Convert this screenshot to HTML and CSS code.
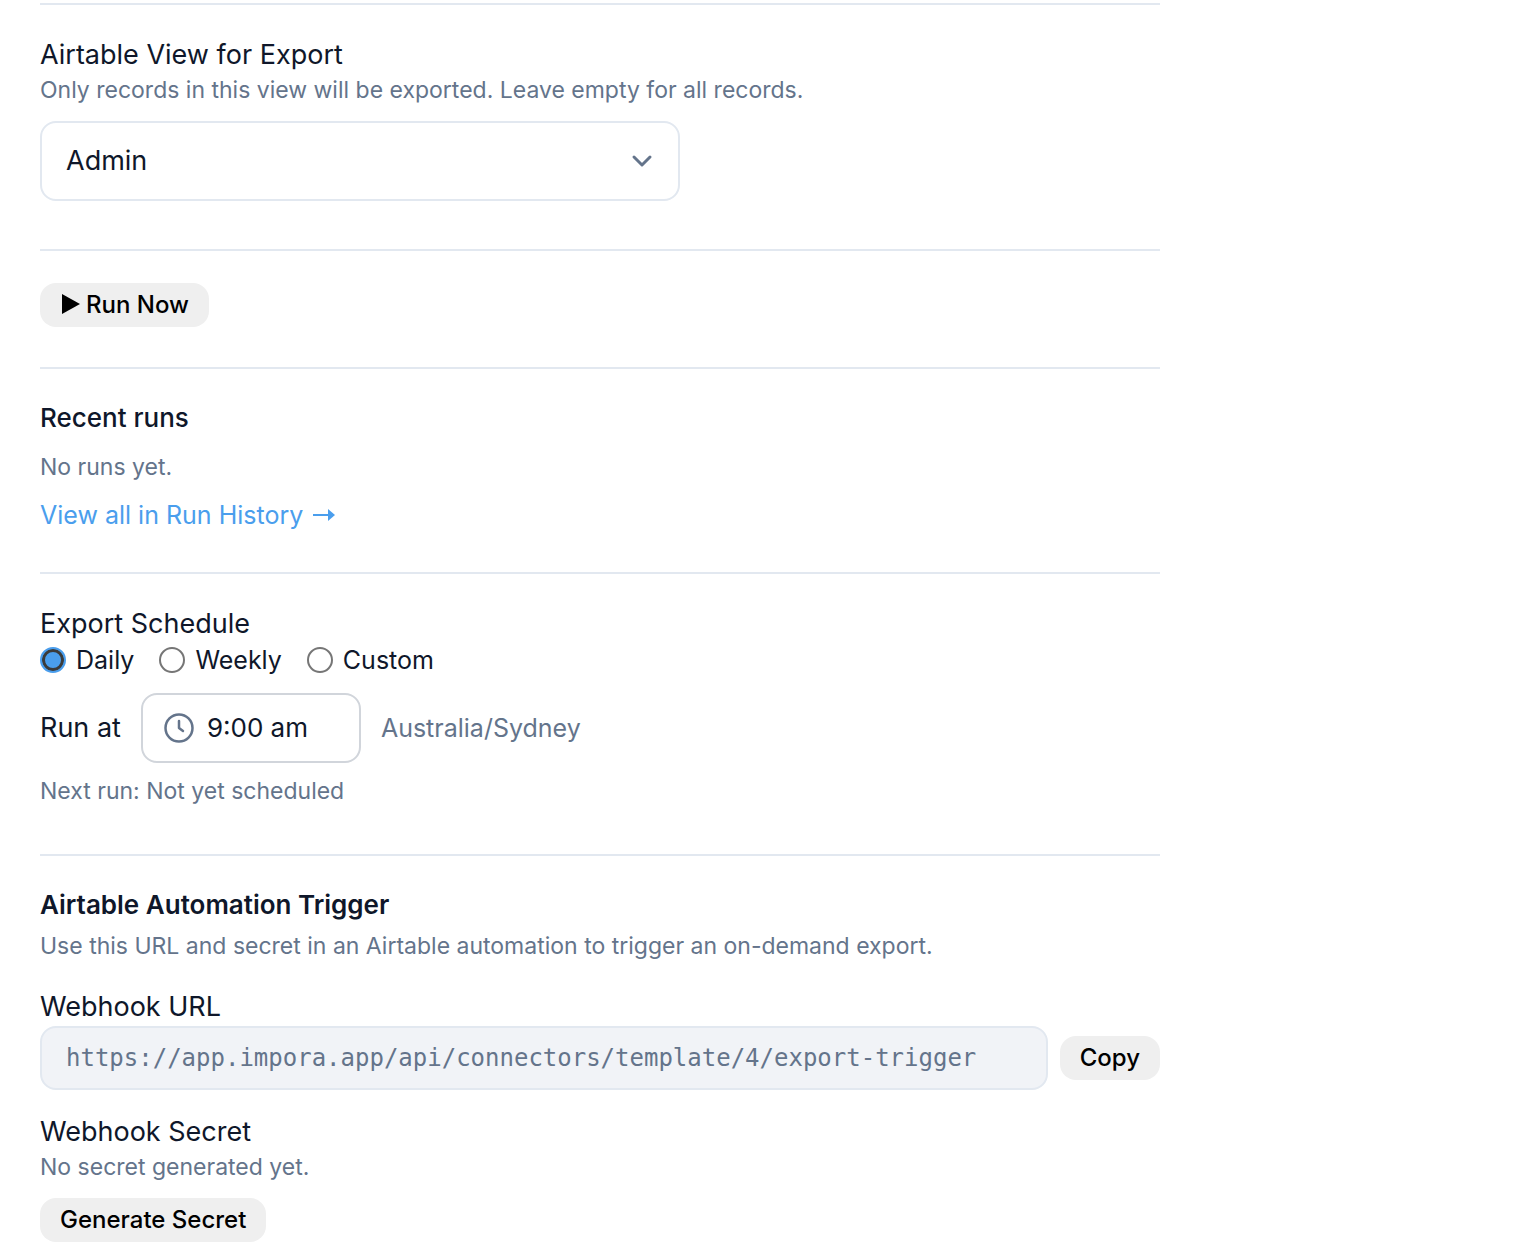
FILE: index.html
```
<!DOCTYPE html>
<html lang="en">
<head>
  <meta charset="UTF-8" />
  <meta name="viewport" content="width=device-width, initial-scale=1.0"/>
  <title>Export settings</title>
  <link rel="stylesheet" href="styles.css">
</head>
<body>
  <main class="page">
    <section class="section section-view">
      <label class="label" for="view">Airtable View for Export</label>
      <p class="hint">Only records in this view will be exported. Leave empty for all records.</p>
      <div class="select-wrap">
        <select id="view" class="select">
          <option>Admin</option>
        </select>
        <svg class="chevron" viewBox="0 0 24 24"><path d="M4 8l8 8 8-8"/></svg>
      </div>
    </section>

    <section class="section">
      <button class="btn" type="button">
        <svg class="play" viewBox="0 0 20 22"><path d="M2 0l18 10L2 20z"/></svg>
        Run Now
      </button>
    </section>

    <section class="section">
      <h2 class="heading heading-medium">Recent runs</h2>
      <p class="hint runs-empty">No runs yet.</p>
      <a class="link" href="#">View all in Run History
        <svg class="arrow" viewBox="0 0 22 14"><path class="shaft" d="M0 7h17"/><path d="M15 1l7 6-7 6z"/></svg>
      </a>
    </section>

    <section class="section section-schedule">
      <h2 class="label">Export Schedule</h2>
      <div class="radios">
        <label class="radio"><input type="radio" name="schedule" checked> Daily</label>
        <label class="radio"><input type="radio" name="schedule"> Weekly</label>
        <label class="radio"><input type="radio" name="schedule"> Custom</label>
      </div>
      <div class="run-at">
        <label class="label" for="time">Run at</label>
        <div class="time">
          <svg class="clock" viewBox="0 0 30 30"><circle cx="15" cy="15" r="13.5"/><path d="M15 8v7l4 3"/></svg>
          <input type="text" id="time" value="9:00 am">
        </div>
        <span class="timezone">Australia/Sydney</span>
      </div>
      <p class="hint">Next run: Not yet scheduled</p>
    </section>

    <section class="section">
      <h2 class="heading">Airtable Automation Trigger</h2>
      <p class="hint trigger-hint">Use this URL and secret in an Airtable automation to trigger an on-demand export.</p>

      <label class="label" for="webhook">Webhook URL</label>
      <div class="url-row">
        <input class="url" type="text" id="webhook" value="https://app.impora.app/api/connectors/template/4/export-trigger" readonly>
        <button class="btn" type="button">Copy</button>
      </div>

      <h3 class="label">Webhook Secret</h3>
      <p class="hint secret-hint">No secret generated yet.</p>
      <button class="btn" type="button">Generate Secret</button>
    </section>
  </main>
</body>
</html>
```
FILE: styles.css
```
:root {
  --text: #0f172a;
  --muted: #64748b;
  --line: #e2e8f0;
  --blue: #4a9eed;
}
* { box-sizing: border-box; margin: 0; padding: 0; }
body {
  background: #fff;
  color: var(--text);
  font-family: Inter, sans-serif;
  font-size: 26px;
  line-height: 34px;
}
input, select, button {
  font: inherit;
  color: inherit;
}
.page {
  max-width: 1200px;
  padding: 3px 40px 0;
}
.section {
  border-top: 2px solid var(--line);
  padding: 32px 0 40px;
}
.section-view { padding-bottom: 48px; }
.section-schedule { padding-bottom: 46px; }

.label {
  display: block;
  font-size: 27px;
  font-weight: 400;
  line-height: 36px;
}
.heading {
  font-size: 26px;
  font-weight: 600;
}
.heading-medium { font-weight: 500; }
.hint {
  color: var(--muted);
  font-size: 23px;
}

/* view select */
.select-wrap {
  position: relative;
  max-width: 640px;
  margin-top: 14px;
}
.select {
  display: block;
  width: 100%;
  height: 80px;
  padding: 0 64px 0 24px;
  appearance: none;
  background: #fff;
  border: 2px solid var(--line);
  border-radius: 16px;
  font-size: 27px;
}
.chevron {
  position: absolute;
  top: 28px;
  right: 26px;
  width: 24px;
  height: 24px;
  fill: none;
  stroke: var(--muted);
  stroke-width: 3;
  stroke-linecap: round;
  stroke-linejoin: round;
  pointer-events: none;
}

.btn {
  display: flex;
  align-items: center;
  gap: 6px;
  height: 44px;
  padding: 0 20px;
  border: none;
  border-radius: 16px;
  background: #efefef;
  color: #000;
  font-size: 24px;
  font-weight: 500;
  cursor: pointer;
}
.play {
  width: 20px;
  height: 22px;
}

.runs-empty { margin: 15px 0 14px; }
.link {
  display: flex;
  align-items: center;
  gap: 10px;
  color: var(--blue);
  font-size: 25px;
  text-decoration: none;
}
.arrow {
  width: 22px;
  height: 14px;
  fill: var(--blue);
}
.shaft {
  stroke: var(--blue);
  stroke-width: 2;
}

/* schedule */
.radios {
  display: flex;
  gap: 25px;
}
.radio {
  display: flex;
  align-items: center;
  gap: 10px;
  font-size: 25px;
  line-height: 36px;
}
.radio input {
  width: 26px;
  height: 26px;
  appearance: none;
  border: 2px solid #767676;
  border-radius: 50%;
  background: #fff;
}
.radio input:checked {
  border-color: var(--blue);
  background: var(--blue);
  box-shadow: inset 0 0 0 3px #3b3b3b;
}
.run-at {
  display: flex;
  align-items: center;
  gap: 20px;
  margin: 15px 0 11px;
}
.time {
  display: flex;
  align-items: center;
  gap: 13px;
  width: 220px;
  height: 70px;
  padding: 0 21px;
  border: 2px solid #d1d5db;
  border-radius: 16px;
}
.time input {
  min-width: 0;
  width: 100%;
  border: none;
  outline: none;
  font-size: 26px;
}
.clock {
  flex: none;
  width: 30px;
  height: 30px;
  fill: none;
  stroke: var(--muted);
  stroke-width: 2.5;
  stroke-linecap: round;
  stroke-linejoin: round;
}
.timezone {
  color: var(--muted);
  font-size: 25px;
}

/* webhook */
.trigger-hint { margin: 7px 0 26px; }
.url-row {
  display: flex;
  align-items: center;
  gap: 12px;
  margin: 1px 0 24px;
}
.url {
  flex: 1;
  min-width: 0;
  height: 64px;
  padding: 0 24px;
  border: 2px solid var(--line);
  border-radius: 16px;
  background: #f1f3f7;
  color: var(--muted);
  font-family: "DejaVu Sans Mono", monospace;
  font-size: 24px;
}
.secret-hint { margin-bottom: 14px; }
```
